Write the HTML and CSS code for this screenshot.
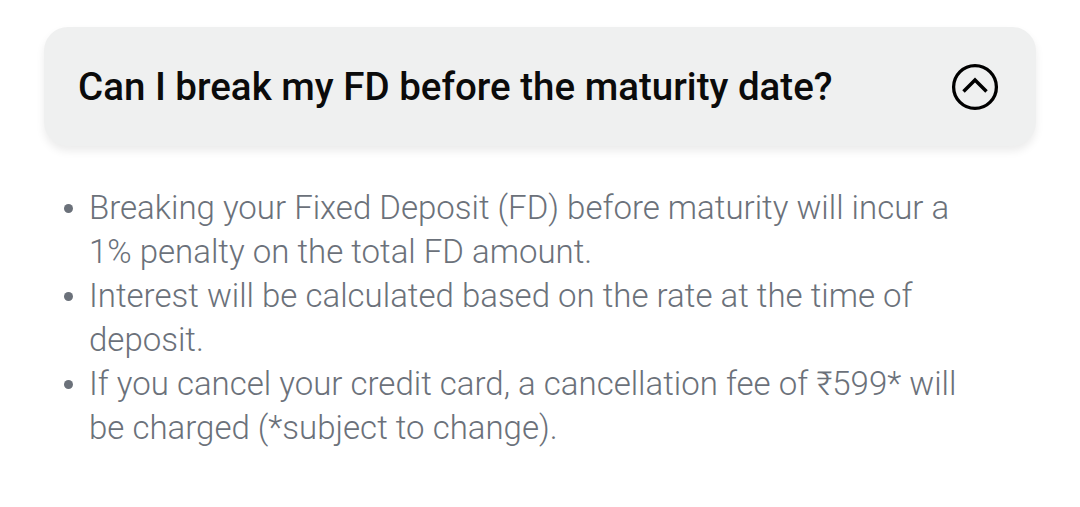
FILE: index.html
```html
<!DOCTYPE html>
<html>
<head>
<meta charset="utf-8">
<link rel="stylesheet" href="styles.css">
</head>
<body>
<div class="faq">
  <div class="faq-head">
    <h2 class="faq-q">Can I break my FD before the maturity date?</h2>
    <svg class="faq-icon" width="50" height="50" viewBox="0 0 50 50" aria-hidden="true">
      <circle cx="25" cy="25" r="21.4" fill="none" stroke="#000" stroke-width="3.3"/>
      <path d="M13.5 29.5 L25 18 L36.5 29.5" fill="none" stroke="#000" stroke-width="3.5" stroke-linecap="butt" stroke-linejoin="miter"/>
    </svg>
  </div>
  <ul class="faq-answer">
    <li>Breaking your Fixed Deposit (FD) before maturity will incur a 1% penalty on the total FD amount.</li>
    <li>Interest will be calculated based on the rate at the time of deposit.</li>
    <li>If you cancel your credit card, a cancellation fee of ₹599* will be charged (*subject to change).</li>
  </ul>
</div>
</body>
</html>
```

FILE: styles.css
```css
html, body {
  margin: 0;
  padding: 0;
  background: #ffffff;
}
body {
  font-family: Roboto, "Noto Sans", sans-serif;
}
.faq {
  padding: 27px 44px 0 44px;
}
.faq-head {
  height: 119px;
  background: #eff0f0;
  border-radius: 24px;
  box-shadow: 0 5px 8px rgba(0, 0, 0, 0.08);
  display: flex;
  align-items: center;
  justify-content: space-between;
  padding: 0 36px 0 34px;
}
.faq-q {
  margin: 0;
  font-size: 38.5px;
  font-weight: 500;
  color: #0b0b0b;
  letter-spacing: 0;
}
.faq-icon {
  display: block;
}
.faq-answer {
  margin: 40px 0 0 0;
  padding: 0 0 0 45px;
  list-style: none;
  color: #6b717a;
  font-size: 33px;
  font-weight: 300;
  line-height: 44px;
  width: 885px;
}
.faq-answer li {
  position: relative;
}
.faq-answer li::before {
  content: "";
  position: absolute;
  left: -25px;
  top: 18px;
  width: 9px;
  height: 9px;
  border-radius: 50%;
  background: #6b717a;
}
```
